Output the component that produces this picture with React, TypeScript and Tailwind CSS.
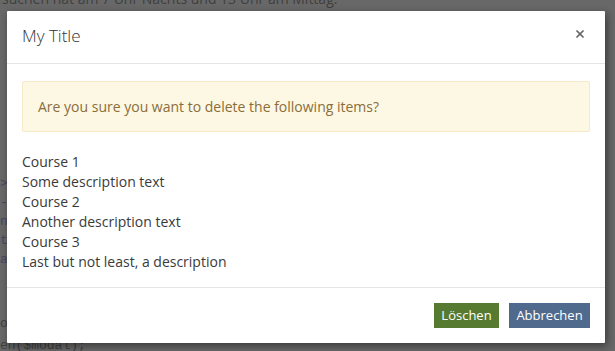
import { X } from 'lucide-react'

const ITEMS = [
  { title: 'Course 1', description: 'Some description text' },
  { title: 'Course 2', description: 'Another description text' },
  { title: 'Course 3', description: 'Last but not least, a description' },
]

export default function App() {
  return (
    <div
      className="relative h-[351px] w-[615px] overflow-hidden bg-[#686868]"
      style={{ fontFamily: '"Open Sans", "Noto Sans", sans-serif' }}
    >
      {/* Dimmed page behind the backdrop */}
      <div className="pointer-events-none select-none text-[14px] leading-[20px] text-[#3f3f3f]">
        <p className="-mt-[11px] pl-[2px]">suchen hat am 7 Uhr Nachts und 13 Uhr am Mittag.</p>
        <div className="mt-[165px] font-mono text-[13px] leading-[19px] text-[#474766]">
          <p>&gt;</p>
          <p>-</p>
          <p>ne</p>
          <p>tr</p>
          <p>a</p>
        </div>
        <p className="mt-[45px] font-mono text-[13px] text-[#404040]">os</p>
        <p className="mt-[2px] font-mono text-[13px] text-[#404040]">en($modal);</p>
      </div>

      {/* Modal */}
      <div className="absolute left-[7px] top-[11px] w-[598px] rounded-[1px] bg-white shadow-[2px_3px_8px_rgba(0,0,0,0.45)]">
        <div className="flex h-[53px] items-center justify-between border-b border-[#e5e5e5] px-[15px]">
          <h4 className="-mt-[2px] text-[17px] font-light text-[#333]">My Title</h4>
          <button className="mr-[4px] -mt-[6px] text-[#666]">
            <X size={12} strokeWidth={3.5} />
          </button>
        </div>

        <div className="px-[15px] pt-[17px] pb-[15px] text-[14px] leading-[20px] text-[#3a3a3a]">
          <div className="mb-[20px] flex h-[51px] items-center rounded-[2px] border border-[#f5e9c8] bg-[#fcf8e3] px-[15px] text-[#8a6d3b]">
            Are you sure you want to delete the following items?
          </div>
          {ITEMS.map((item) => (
            <div key={item.title}>
              <p>{item.title}</p>
              <p>{item.description}</p>
            </div>
          ))}
        </div>

        <div className="flex justify-end gap-[10px] border-t border-[#e5e5e5] px-[15px] pt-[15px] pb-[15px]">
          <button className="h-[25px] w-[65px] bg-[#567a2f] text-[13px] text-white">Löschen</button>
          <button className="h-[25px] w-[81px] bg-[#506a8e] text-[13px] text-white">Abbrechen</button>
        </div>
      </div>
    </div>
  )
}
